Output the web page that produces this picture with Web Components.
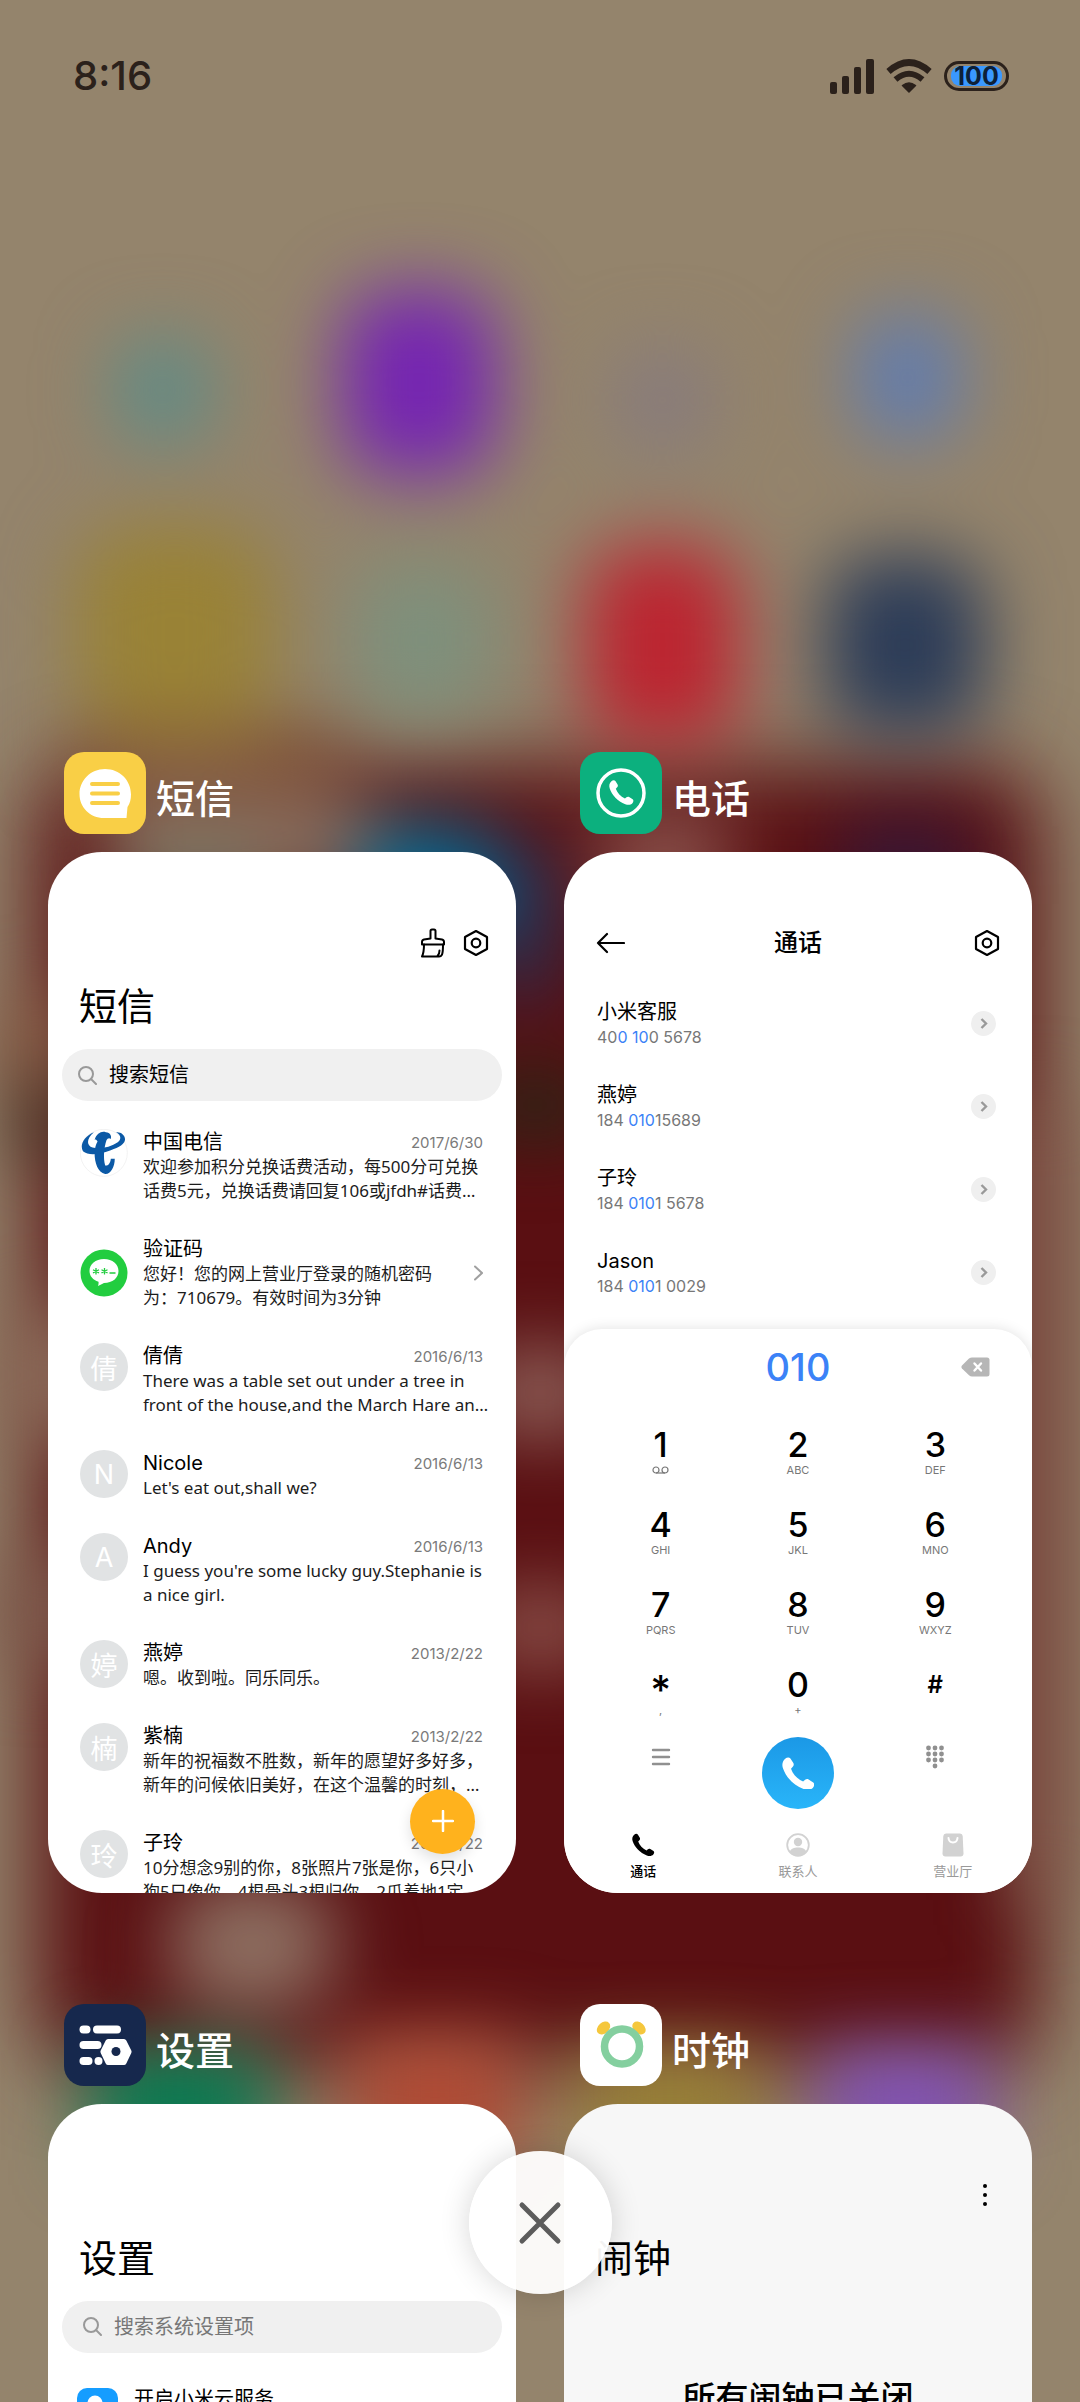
<!DOCTYPE html>
<html lang="zh-CN">
<head>
<meta charset="utf-8">
<meta name="viewport" content="width=device-width, initial-scale=1">
<title>最近任务</title>
<style>
    html, body { height: 100%; }
    body {
        margin: 0;
        overflow: hidden;
        font-family: Inter, "Noto Sans CJK SC", sans-serif;
        color: #000;
        background: #94846c;
    }
</style>
</head>
<body>
<recents-screen>
    <status-bar slot="status" time="8:16" battery="100"></status-bar>

    <task-card label="短信">
        <app-icon slot="icon" name="messages"></app-icon>
        <card-toolbar>
            <icon-button slot="end" name="broom" label="清理"></icon-button>
            <icon-button slot="end" name="gear" label="设置"></icon-button>
        </card-toolbar>
        <big-title>短信</big-title>
        <search-box hint="搜索短信" style="--hint: #000"></search-box>
        <message-list>
            <message-item name="中国电信" date="2017/6/30" logo="telecom">欢迎参加积分兑换话费活动，每500分可兑换<br>话费5元，兑换话费请回复106或jfdh#话费…</message-item>
            <message-item name="验证码" logo="code" more>您好！您的网上营业厅登录的随机密码<br>为：710679。有效时间为3分钟</message-item>
            <message-item name="倩倩" date="2016/6/13" initial="倩">There was a table set out under a tree in<br>front of the house,and the March Hare an…</message-item>
            <message-item name="Nicole" date="2016/6/13" initial="N">Let's eat out,shall we?</message-item>
            <message-item name="Andy" date="2016/6/13" initial="A">I guess you're some lucky guy.Stephanie is<br>a nice girl.</message-item>
            <message-item name="燕婷" date="2013/2/22" initial="婷">嗯。收到啦。同乐同乐。</message-item>
            <message-item name="紫楠" date="2013/2/22" initial="楠">新年的祝福数不胜数，新年的愿望好多好多，<br>新年的问候依旧美好，在这个温馨的时刻，…</message-item>
            <message-item name="子玲" date="2013/2/22" initial="玲">10分想念9别的你，8张照片7张是你，6只小<br>狗5只像你，4根骨头3根归你，2爪着地1定…</message-item>
        </message-list>
        <fab-button label="新建短信"></fab-button>
    </task-card>

    <task-card label="电话">
        <app-icon slot="icon" name="phone"></app-icon>
        <card-toolbar heading="通话" style="--pad: 32px">
            <icon-button slot="start" name="back" label="返回"></icon-button>
            <icon-button slot="end" name="gear" label="设置"></icon-button>
        </card-toolbar>
        <contact-list>
            <contact-row name="小米客服">40<b>0 10</b>0 5678</contact-row>
            <contact-row name="燕婷">184 <b>010</b>15689</contact-row>
            <contact-row name="子玲">184 <b>010</b>1 5678</contact-row>
            <contact-row name="Jason">184 <b>010</b>1 0029</contact-row>
        </contact-list>
        <dial-pad number="010"></dial-pad>
    </task-card>

    <task-card label="设置">
        <app-icon slot="icon" name="settings"></app-icon>
        <card-toolbar></card-toolbar>
        <big-title>设置</big-title>
        <search-box hint="搜索系统设置项" style="--hint: #777; --inset: 21px"></search-box>
        <setting-row>开启小米云服务</setting-row>
    </task-card>

    <task-card label="时钟" style="--card: #f7f7f7">
        <app-icon slot="icon" name="clock"></app-icon>
        <card-toolbar style="--pad: 36px">
            <icon-button slot="end" name="kebab" label="更多"></icon-button>
        </card-toolbar>
        <big-title>闹钟</big-title>
        <alarm-status>所有闹钟已关闭</alarm-status>
    </task-card>

    <close-all slot="overlay"></close-all>
</recents-screen>

<script>
(function () {
    const HANDSET = 'M2.2 1.2C3.4.1 5 0 5.8 1l2 3.2c.5.9.3 1.8-.4 2.5L6.2 8c1.400 4 4.300 7 8.300 8.900l1.400-1.200c.7-.6 1.600-.7 2.400-.2l3.200 2.100c1 .8.9 2.300-.2 3.500-1.500 1.600-3.800 1.900-6.500.9C8 19.600 2.500 13.600.6 7.600-.2 5 .4 2.800 2.200 1.200z';

    const ICONS = {
        gear: '<svg width="26" height="28" viewBox="0 0 26 28" fill="none" stroke="#000" stroke-width="2.200" stroke-linejoin="round"><path d="M13 2l11 6v12l-11 6-11-6V8z"/><circle cx="13" cy="14" r="4.300"/></svg>',
        broom: '<svg width="24" height="30" viewBox="0 0 24 30" fill="none" stroke="#000" stroke-width="2" stroke-linejoin="round" stroke-linecap="round"><path d="M9.500 10.500V3q0-1.500 1.500-1.500h2q1.500 0 1.500 1.500v7.500l6.500 1q2 .5 2 2.500v2.500H1V14q0-2 2-2.500z"/><path d="M3 16.500c0 5-.5 9-2 12h17c3 0 4-2 4-12M16.500 28c1.500-1.500 2-3.500 2-5.500"/></svg>',
        back: '<svg width="29" height="22" viewBox="0 0 29 22" fill="none" stroke="#000" stroke-width="2.200" stroke-linecap="round" stroke-linejoin="round"><path d="M11 2L2 11l9 9M2 11h26"/></svg>',
        kebab: '<svg width="22" height="22" viewBox="0 0 22 22"><circle cx="11" cy="2" r="2"/><circle cx="11" cy="11" r="2"/><circle cx="11" cy="20" r="2"/></svg>',
        menu: '<svg width="20" height="24" viewBox="0 0 20 24" stroke="#909090" stroke-width="2.400" stroke-linecap="round"><path d="M2 5h16M2 12h16M2 19h16"/></svg>',
        keys: '<svg width="20" height="24" viewBox="0 0 20 24" fill="#909090"><circle cx="3.500" cy="3" r="2.400"/><circle cx="10" cy="3" r="2.400"/><circle cx="16.500" cy="3" r="2.400"/><circle cx="3.500" cy="9" r="2.400"/><circle cx="10" cy="9" r="2.400"/><circle cx="16.500" cy="9" r="2.400"/><circle cx="3.500" cy="15" r="2.400"/><circle cx="10" cy="15" r="2.400"/><circle cx="16.500" cy="15" r="2.400"/><circle cx="10" cy="21" r="2.400"/></svg>',
        erase: '<svg width="29" height="20" viewBox="0 0 29 20"><path d="M1 8.500L8 1.500Q9.500.5 11 .5h15q2.500 0 2.500 2.500v14q0 2.500-2.500 2.500H11q-1.500 0-3-1.200L1 11.500q-1.200-1.500 0-3z" fill="#b6b6b6"/><path d="M13.500 6.500l6.500 7M20 6.500l-6.500 7" stroke="#fff" stroke-width="2.400" stroke-linecap="round"/></svg>'
    };

    function define(name, html, setup) {
        let tmpl = document.createElement('template');
        tmpl.innerHTML = html;
        customElements.define(name, class extends HTMLElement {
            constructor() {
                super();
                this.attachShadow({ mode: 'open' });
                this.shadowRoot.appendChild(tmpl.content.cloneNode(true));
            }

            connectedCallback() {
                if (setup && !this.ready) {
                    this.ready = true;
                    setup(this, this.shadowRoot);
                }
            }
        });
    }

    // blurred home screen behind the cards
    define('home-backdrop', `
      <style>
        :host { position: absolute; inset: 0; z-index: -1; overflow: hidden; }
        svg { display: block; width: 100%; height: 100%; }
      </style>
      <svg viewBox="0 0 1080 2402" preserveAspectRatio="none" aria-hidden="true">
        <defs>
          <filter id="soft" x="-20%" y="-20%" width="140%" height="140%" color-interpolation-filters="sRGB"><feGaussianBlur stdDeviation="37"/></filter>
          <filter id="wide" x="-20%" y="-20%" width="140%" height="140%" color-interpolation-filters="sRGB"><feGaussianBlur stdDeviation="42"/></filter>
        </defs>
        <rect width="1080" height="2402" fill="#94846c"/>
        <rect x="36" y="765" width="1005" height="1305" rx="60" fill="#5a0f12" filter="url(#wide)"/>
        <g filter="url(#soft)">
          <rect x="115" y="340" width="95" height="100" rx="30" fill="#5c8c88"/>
          <rect x="342" y="290" width="154" height="185" rx="50" fill="#7524b2"/>
          <rect x="615" y="350" width="95" height="100" rx="30" fill="#867a7e"/>
          <rect x="855" y="315" width="105" height="125" rx="36" fill="#607cb0"/>
          <rect x="75" y="525" width="200" height="210" rx="60" fill="#998236"/>
          <rect x="350" y="560" width="145" height="160" rx="50" fill="#7e907c"/>
          <rect x="585" y="545" width="155" height="200" rx="50" fill="#bc2430"/>
          <rect x="825" y="555" width="160" height="180" rx="50" fill="#2c3c58"/>
          <rect x="70" y="730" width="270" height="50" fill="#845a38"/>
          <rect x="100" y="790" width="280" height="100" fill="#8a6c5c"/>
          <rect x="130" y="850" width="140" height="50" fill="#76866e"/>
          <rect x="355" y="825" width="145" height="110" rx="40" fill="#006c96"/>
          <rect x="500" y="850" width="50" height="150" fill="#1a3862"/>
          <rect x="600" y="820" width="130" height="75" fill="#946058"/>
          <rect x="840" y="825" width="130" height="80" fill="#30183c"/>
          <rect x="0" y="1000" width="70" height="80" fill="#8a6248"/>
          <rect x="20" y="1085" width="60" height="70" fill="#3c3424"/>
          <rect x="480" y="1075" width="110" height="60" fill="#202a18"/>
          <rect x="0" y="1310" width="100" height="130" fill="#8c6c5a"/>
          <rect x="480" y="1350" width="120" height="85" fill="#90645c"/>
          <rect x="0" y="1560" width="90" height="100" fill="#7f5c4e"/>
          <rect x="480" y="1590" width="120" height="75" fill="#8e564e"/>
          <rect x="1015" y="1100" width="50" height="800" fill="#855c4e"/>
          <rect x="170" y="1880" width="165" height="130" rx="50" fill="#8e7062"/>
          <rect x="90" y="2050" width="180" height="110" fill="#007a50"/>
          <rect x="350" y="2035" width="170" height="140" fill="#b04a34"/>
          <rect x="580" y="2050" width="180" height="110" fill="#988034"/>
          <rect x="820" y="2050" width="170" height="110" fill="#8050b8"/>
        </g>
      </svg>
    `);

    define('recents-screen', `
      <style>
        :host { position: relative; display: block; height: 100%; overflow: hidden; isolation: isolate; }
        main {
            display: grid;
            grid-template-columns: 1fr 1fr;
            column-gap: 48px;
            row-gap: 111px;
            padding: 652px 48px 0;
        }
        .overlay { position: absolute; left: 0; right: 0; bottom: 108px; display: flex; justify-content: center; }
      </style>
      <home-backdrop></home-backdrop>
      <slot name="status"></slot>
      <main><slot></slot></main>
      <div class="overlay"><slot name="overlay"></slot></div>
    `);

    define('status-bar', `
      <style>
        :host {
            box-sizing: border-box;
            display: flex;
            align-items: center;
            gap: 12px;
            height: 100px;
            padding: 52px 71px 0 73px;
            color: #2b211b;
        }
        .time { font-size: 40px; font-weight: 500; line-height: 48px; margin-right: auto; }
        svg { display: block; }
        .battery {
            box-sizing: border-box;
            width: 65px;
            height: 30px;
            border: 3px solid #2b211b;
            border-radius: 15px;
            padding: 2px 4px;
            display: flex;
        }
        .battery span {
            flex: 1;
            border-radius: 9px;
            background: #3a98ff;
            color: #0d2038;
            font-size: 25px;
            font-weight: 700;
            line-height: 20px;
            display: flex;
            justify-content: center;
        }
      </style>
      <span class="time"></span>
      <svg width="44" height="35" viewBox="0 0 44 35" fill="#2b211b"><rect y="23" width="7" height="12" rx="2"/><rect x="12" y="17" width="7" height="18" rx="2"/><rect x="24" y="8" width="7" height="27" rx="2"/><rect x="36" width="8" height="35" rx="2"/></svg>
      <svg width="46" height="34" viewBox="0 0 46 34" fill="none" stroke="#2b211b"><path d="M2.500 12.500Q23-5.500 43.500 12.500" stroke-width="6.500"/><path d="M9.500 20.500Q23 9 36.500 20.500" stroke-width="6"/><path d="M16.500 26.500Q23 21.500 29.500 26.500L23 33z" fill="#2b211b" stroke-width="1.500" stroke-linejoin="round"/></svg>
      <div class="battery"><span></span></div>
    `, (el, root) => {
        root.querySelector('.time').textContent = el.getAttribute('time');
        root.querySelector('.battery span').textContent = el.getAttribute('battery');
    });

    define('task-card', `
      <style>
        :host { display: block; min-width: 0; }
        header { display: flex; align-items: center; gap: 10px; height: 82px; padding-left: 16px; margin-bottom: 18px; }
        h2 { margin: 0; padding-top: 12px; color: #fff; font-size: 39px; font-weight: 500; line-height: 48px; }
        article {
            position: relative;
            box-sizing: border-box;
            display: flex;
            flex-direction: column;
            aspect-ratio: 1080 / 2402;
            padding-top: 64px;
            border-radius: 54px;
            background: var(--card, #fff);
            overflow: hidden;
        }
      </style>
      <header><slot name="icon"></slot><h2></h2></header>
      <article><slot></slot></article>
    `, (el, root) => {
        root.querySelector('h2').textContent = el.getAttribute('label');
    });

    const APPS = {
        messages: ['#f9cf46', '<path d="M41 17c14.500 0 26 11 26 25.500 0 5-1 9-3.500 12.500l-1 11H40C26 66 15.500 55.500 15.500 42S26.500 17 41 17z" fill="#fff"/><path d="M28 32h26M28 41.500h26M28 51h26" stroke="#f9cf46" stroke-width="4" stroke-linecap="round"/>'],
        phone: ['#0cb07e', '<circle cx="41" cy="41" r="23" fill="none" stroke="#fff" stroke-width="3.500"/><path transform="translate(29 28) scale(1.100)" d="' + HANDSET + '" fill="#fff"/>'],
        settings: ['#16284d', '<g fill="#fff"><rect x="15.500" y="21.500" width="11" height="8" rx="4"/><rect x="29" y="21.500" width="28" height="8" rx="4"/><rect x="15.500" y="37" width="22" height="8" rx="4"/><rect x="15.500" y="53" width="13" height="8" rx="4"/><circle cx="34.500" cy="57" r="4"/><path d="M44 35h16q1.500 0 2.300 1.500l5 10q.6 1.200 0 2.400l-5 10.500Q61.500 61 60 61H44q-1.500 0-2.300-1.500l-5-10.500q-.6-1.200 0-2.400l5-10.100Q42.500 35 44 35z"/></g><circle cx="52" cy="47.500" r="4.500" fill="#16284d"/>'],
        clock: ['#fff', '<g fill="#f5c73d"><ellipse cx="23.500" cy="24" rx="7.500" ry="5.500" transform="rotate(-42 23.500 24)"/><ellipse cx="59" cy="24" rx="7.500" ry="5.500" transform="rotate(42 59 24)"/></g><circle cx="42" cy="42.500" r="17.500" fill="#fff" stroke="#84cf9f" stroke-width="7.500"/>']
    };

    define('app-icon', `
      <style>
        :host { display: block; width: 82px; height: 82px; border-radius: 20px; overflow: hidden; flex: none; }
        svg { display: block; }
      </style>
      <svg width="82" height="82" viewBox="0 0 82 82" aria-hidden="true"></svg>
    `, (el, root) => {
        let app = APPS[el.getAttribute('name')];
        root.querySelector('svg').innerHTML = '<rect width="82" height="82" fill="' + app[0] + '"/>' + app[1];
    });

    define('icon-button', `
      <style>
        :host { display: block; }
        button { display: flex; border: 0; padding: 0; background: none; }
      </style>
      <button type="button"></button>
    `, (el, root) => {
        let btn = root.querySelector('button');
        btn.innerHTML = ICONS[el.getAttribute('name')];
        btn.setAttribute('aria-label', el.getAttribute('label'));
    });

    define('card-toolbar', `
      <style>
        :host {
            box-sizing: border-box;
            display: grid;
            grid-template-columns: 1fr auto 1fr;
            align-items: center;
            flex: none;
            height: 54px;
            padding: 0 var(--pad, 27px);
        }
        h3 { margin: 0; font-size: 24px; font-weight: 500; line-height: 32px; }
        .end { display: flex; align-items: center; justify-content: flex-end; gap: 18px; }
      </style>
      <div><slot name="start"></slot></div>
      <h3></h3>
      <div class="end"><slot name="end"></slot></div>
    `, (el, root) => {
        root.querySelector('h3').textContent = el.getAttribute('heading') || '';
    });

    define('big-title', `
      <style>
        :host { display: block; flex: none; padding-left: 31px; font-size: 38px; line-height: 72px; }
      </style>
      <slot></slot>
    `);

    define('search-box', `
      <style>
        :host { display: block; flex: none; margin: 7px 14px 0; }
        label {
            display: flex;
            align-items: center;
            gap: 12px;
            height: 52px;
            padding: 0 var(--inset, 16px);
            border-radius: 26px;
            background: #f0f0f0;
        }
        svg { display: block; flex: none; }
        input {
            flex: 1;
            min-width: 0;
            border: 0;
            padding: 0;
            background: none;
            font: 20px/28px Inter, "Noto Sans CJK SC", sans-serif;
        }
        input::placeholder { color: var(--hint, #777); opacity: 1; }
      </style>
      <label>
        <svg width="19" height="19" viewBox="0 0 19 19" fill="none" stroke="#999" stroke-width="2" stroke-linecap="round"><circle cx="8" cy="8" r="7"/><path d="M13 13l5 5"/></svg>
        <input type="search">
      </label>
    `, (el, root) => {
        let input = root.querySelector('input');
        input.placeholder = el.getAttribute('hint');
        input.setAttribute('aria-label', el.getAttribute('hint'));
    });

    define('message-list', `
      <style>
        :host { display: block; padding: 12px 33px 0 32px; }
      </style>
      <slot></slot>
    `);

    const LOGOS = {
        telecom: '<svg width="48" height="48" viewBox="120 87 145 145"><circle cx="192" cy="159" r="71" fill="#fff" stroke="#ececec" stroke-width="2"/><g fill="#0b59a6"><path d="M162 97C130 110 119 138 129 154c18 16 56 8 84-3 26-8 44-19 43-34-1-13-14-22-27-20 16 8 16 22 5 30-22 15-54 22-76 16-20-6-18-28 4-46z"/><path d="M164 120c6-20 22-28 34-23 14 1 18 12 15 20-5-4-10-2-13 4-8 24-10 54-4 76 9 3 16-7 17-20h12c0 24-12 47-29 46-22-4-32-33-32-64 1-16 4-26 9-34-4-6-6-7-9-5z"/></g></svg>',
        code: '<svg width="48" height="48" viewBox="0 0 48 48"><circle cx="24" cy="24" r="23.500" fill="#22cd3f"/><path d="M24 10c8.500 0 14.500 5 14.500 12S32.500 34 24 34l-6 3q.8-2 .5-4.200C13 31 9.500 27 9.500 22c0-7 6-12 14.500-12z" fill="#fff"/><path d="M16 19v6.500M13 20.700l6 3.200M19 20.700l-6 3.200M24.500 19v6.500M21.500 20.700l6 3.200M27.500 20.700l-6 3.200M29.500 24h6" stroke="#22cd3f" stroke-width="1.300"/></svg>'
    };

    define('message-item', `
      <style>
        :host { display: flex; gap: 15px; padding: 16px 0 17px; }
        .avatar {
            flex: none;
            display: flex;
            align-items: center;
            justify-content: center;
            width: 48px;
            height: 48px;
            border-radius: 50%;
            background: #e1e3e4;
            color: #fff;
            font-size: 27px;
        }
        :host([logo]) .avatar { background: none; }
        :host([more]) .avatar { align-self: center; }
        .body { flex: 1; min-width: 0; }
        .top { display: flex; align-items: center; justify-content: space-between; height: 26px; }
        h4 { margin: 0; font-size: 20px; font-weight: 400; line-height: 26px; }
        time { color: #7a7a7a; font-size: 15px; line-height: 26px; padding-top: 2px; }
        p {
            margin: 0;
            font-family: "Noto Sans", "Noto Sans CJK SC", sans-serif;
            font-size: 17px;
            line-height: 24px;
            white-space: nowrap;
            color: #1c1c1c;
        }
        .arrow { display: none; align-self: center; }
        :host([more]) .arrow { display: block; }
      </style>
      <div class="avatar"></div>
      <div class="body">
        <div class="top"><h4></h4><time></time></div>
        <p><slot></slot></p>
      </div>
      <svg class="arrow" width="9" height="16" viewBox="0 0 9 16" fill="none" stroke="#a0a0a0" stroke-width="2" stroke-linecap="round"><path d="M1 1.500l7 6.500-7 6.500"/></svg>
    `, (el, root) => {
        let avatar = root.querySelector('.avatar');
        if (el.hasAttribute('logo')) {
            avatar.innerHTML = LOGOS[el.getAttribute('logo')];
        } else {
            avatar.textContent = el.getAttribute('initial');
        }
        root.querySelector('h4').textContent = el.getAttribute('name');
        root.querySelector('time').textContent = el.getAttribute('date') || '';
    });

    define('fab-button', `
      <style>
        :host { position: absolute; right: 41px; bottom: 39px; }
        button {
            display: flex;
            align-items: center;
            justify-content: center;
            width: 65px;
            height: 65px;
            border: 0;
            border-radius: 50%;
            padding: 0;
            background: #ffb21d;
            box-shadow: 0 6px 14px rgba(0, 0, 0, .12);
        }
      </style>
      <button type="button"><svg width="22" height="22" viewBox="0 0 22 22" stroke="#fff" stroke-width="2.500" stroke-linecap="round"><path d="M11 1v20M1 11h20"/></svg></button>
    `, (el, root) => {
        root.querySelector('button').setAttribute('aria-label', el.getAttribute('label'));
    });

    define('contact-list', `
      <style>
        :host { display: block; flex: none; padding: 12px 36px 0 33px; }
      </style>
      <slot></slot>
    `);

    define('contact-row', `
      <style>
        :host { display: flex; align-items: center; justify-content: space-between; height: 83px; }
        h4 { margin: 0; font-size: 20px; font-weight: 400; line-height: 26px; }
        p { margin: 0; font-size: 16px; line-height: 24px; color: #777; }
        ::slotted(b) { font-weight: 400; color: #3b82f7; }
        button {
            display: flex;
            align-items: center;
            justify-content: center;
            width: 25px;
            height: 25px;
            border: 0;
            border-radius: 50%;
            padding: 0;
            background: #efefef;
        }
      </style>
      <div><h4></h4><p><slot></slot></p></div>
      <button type="button" aria-label="详情"><svg width="8" height="11" viewBox="0 0 8 11" fill="none" stroke="#999" stroke-width="2.400"><path d="M1.500 1l4.500 4.500L1.500 10"/></svg></button>
    `, (el, root) => {
        root.querySelector('h4').textContent = el.getAttribute('name');
    });

    const KEYS = [
        ['1', '<svg width="17" height="8" viewBox="0 0 17 8" fill="none" stroke="#777" stroke-width="1.200"><circle cx="4" cy="4" r="3"/><circle cx="13" cy="4" r="3"/><path d="M4 7h9"/></svg>'],
        ['2', 'ABC'], ['3', 'DEF'], ['4', 'GHI'], ['5', 'JKL'], ['6', 'MNO'],
        ['7', 'PQRS'], ['8', 'TUV'], ['9', 'WXYZ'], ['*', ','], ['0', '+'], ['#', '']
    ];

    define('dial-pad', `
      <style>
        :host {
            display: block;
            flex: 1;
            margin-top: 15px;
            border-radius: 38px 38px 0 0;
            background: #fff;
            box-shadow: 0 0 14px rgba(0, 0, 0, .12);
        }
        button { border: 0; padding: 0; background: none; font-family: inherit; color: #000; }
        svg { display: block; }
        .number { display: grid; grid-template-columns: 1fr auto 1fr; align-items: center; height: 76px; padding: 0 42px; }
        output { grid-column: 2; color: #3b82f7; font-size: 38px; font-weight: 500; line-height: 48px; }
        .number button { justify-self: end; }
        .keys, .actions { display: grid; grid-template-columns: repeat(3, 1fr); padding: 0 28px; justify-items: center; }
        .keys { grid-auto-rows: 50px; row-gap: 30px; margin-top: 22px; }
        .key { display: flex; flex-direction: column; align-items: center; }
        .digit { height: 36px; font-size: 34px; font-weight: 500; line-height: 36px; }
        .symbol .digit { font-size: 24px; font-weight: 600; }
        .star .digit { font-size: 40px; line-height: 46px; }
        .letters { height: 14px; display: flex; align-items: center; font-size: 11px; line-height: 14px; color: #777; }
        .actions { margin-top: 20px; }
        .side { height: 40px; }
        .call {
            display: flex;
            align-items: center;
            justify-content: center;
            width: 72px;
            height: 72px;
            border-radius: 50%;
            background: linear-gradient(#1b98e6, #29b5f9);
        }
        nav { display: grid; grid-template-columns: repeat(3, 1fr); margin-top: 24px; padding: 0 2px; }
        nav button { display: flex; flex-direction: column; align-items: center; gap: 4px; font-size: 13px; line-height: 20px; color: #999; }
        nav .on { color: #000; font-weight: 500; }
      </style>
      <div class="number">
        <output></output>
        <button type="button" aria-label="删除">${ICONS.erase}</button>
      </div>
      <div class="keys"></div>
      <div class="actions">
        <button class="side" type="button" aria-label="菜单">${ICONS.menu}</button>
        <button class="call" type="button" aria-label="拨号"><svg width="32" height="32" viewBox="0 0 22 22" fill="#fff"><path d="${HANDSET}"/></svg></button>
        <button class="side" type="button" aria-label="收起键盘">${ICONS.keys}</button>
      </div>
      <nav>
        <button class="on" type="button"><svg width="24" height="24" viewBox="-0.500 -0.500 23 24"><path d="${HANDSET}"/></svg>通话</button>
        <button type="button"><svg width="24" height="24" viewBox="0 0 24 24"><circle cx="12" cy="12" r="10.800" fill="none" stroke="#d2d2d2" stroke-width="1.800"/><circle cx="12" cy="9" r="4.200" fill="#d2d2d2"/><path d="M3.500 19C5 15.500 8 14.500 12 14.500s7 1 8.500 4.500Q17 23 12 23t-8.500-4z" fill="#d2d2d2"/></svg>联系人</button>
        <button type="button"><svg width="24" height="24" viewBox="0 0 24 24"><path d="M5 .5h14q2.500 0 2.700 2.500l.8 17.500q0 3-3 3H4.500q-3 0-3-3L2.300 3Q2.500.5 5 .5z" fill="#d2d2d2"/><path d="M7.500 5c.5 6 8.500 6 9 0" fill="none" stroke="#fff" stroke-width="2" stroke-linecap="round"/></svg>营业厅</button>
      </nav>
    `, (el, root) => {
        root.querySelector('output').textContent = el.getAttribute('number');
        root.querySelector('.keys').innerHTML = KEYS.map(([digit, letters]) => {
            let cls = digit === '*' ? 'key star' : digit === '#' ? 'key symbol' : 'key';
            return `<button class="${cls}" type="button"><span class="digit">${digit}</span><span class="letters">${letters}</span></button>`;
        }).join('');
    });

    define('setting-row', `
      <style>
        :host { display: flex; align-items: flex-start; gap: 16px; flex: none; padding: 35px 29px 0; font-size: 20px; line-height: 22px; }
        svg { display: block; flex: none; }
      </style>
      <svg width="41" height="41" viewBox="0 0 41 41"><rect width="41" height="41" rx="10" fill="#159dff"/><circle cx="18" cy="15" r="7.500" fill="#fff"/><rect x="7" y="17" width="27" height="14" rx="7" fill="#fff"/></svg>
      <span><slot></slot></span>
    `);

    define('alarm-status', `
      <style>
        :host { display: block; flex: none; padding-top: 84px; text-align: center; font-size: 33px; font-weight: 500; line-height: 40px; }
      </style>
      <slot></slot>
    `);

    define('close-all', `
      <style>
        :host { display: block; }
        button {
            display: flex;
            align-items: center;
            justify-content: center;
            width: 143px;
            height: 143px;
            border: 0;
            border-radius: 50%;
            padding: 0;
            background: rgba(255, 255, 255, .95);
            box-shadow: 0 0 30px rgba(0, 0, 0, .16);
        }
      </style>
      <button type="button" aria-label="关闭全部"><svg width="44" height="44" viewBox="0 0 44 44" stroke="#5c5c5c" stroke-width="5" stroke-linecap="round"><path d="M4 4l36 36M40 4L4 40"/></svg></button>
    `);
})();
</script>
</body>
</html>
